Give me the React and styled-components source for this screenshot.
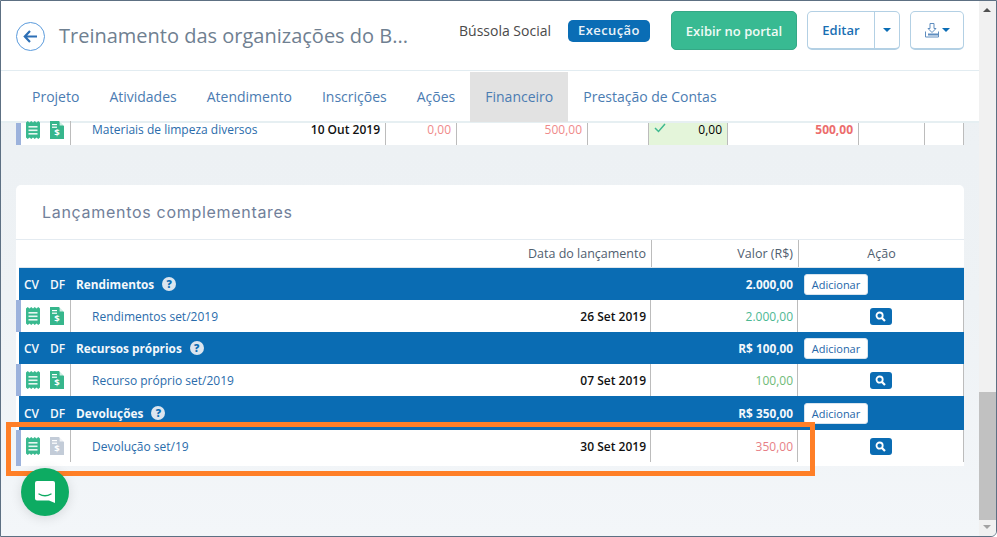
import React from "react";
import styled, { createGlobalStyle } from "styled-components";

const Global = createGlobalStyle`
  html, body { margin: 0; padding: 0; width: 997px; height: 537px; overflow: hidden; }
  body { font-family: "Open Sans", "Liberation Sans", sans-serif; }
  * { box-sizing: border-box; }
`;
const Frame = styled.div`
  position: relative; width: 997px; height: 537px; display: flex; overflow: hidden;
  border-top: 1px solid #5d7083; border-left: 1px solid #5d7083; border-bottom: 1px solid #5d7083;
  border-right: 1px solid #5d7083; border-bottom-right-radius: 6px;
  background: #f1f5f8;
`;
const Main = styled.div`
  width: 979px; display: flex; flex-direction: column; height: 100%;
  background: linear-gradient(180deg, #ecf0f3 0, #eef2f5 300px, #f3f6f9 100%);
`;
const Header = styled.header`
  height: 70px; flex: none; background: #fff; border-bottom: 1px solid #e2ecf1;
  display: flex; align-items: center; padding: 0 0 10px 15px;
`;
const BackCircle = styled.div`
  width: 29px; height: 29px; border-radius: 50%; border: 1px solid #5b9bdc; color: #2d6fb5;
  display: flex; align-items: center; justify-content: center; flex: none; margin: 11px 14px 0 0;
`;
const Title = styled.h1`
  margin: 10px 0 0; font-size: 20px; font-weight: 400; color: #6f8091; width: 350px; flex: none;
  white-space: nowrap;
`;
const Org = styled.span`
  margin-left: 50px; font-size: 14px; color: #4a4a4a; white-space: nowrap; width: 92px; flex: none;
`;
const Badge = styled.span`
  margin-left: 17px; width: 82px; height: 22px; border-radius: 5px; background: #0a6db5; color: #e9f2f8;
  font-size: 13px; font-weight: 600; display: flex; align-items: center; justify-content: center;
  flex: none; letter-spacing: .4px; padding-bottom: 1px;
`;
const PortalButton = styled.button`
  margin-left: 21px; width: 126px; height: 39px; border-radius: 5px; border: 1px solid #35a886; background: #38ba92;
  color: #f0faf6; font: 600 13px "Open Sans", sans-serif; padding: 0; flex: none;
`;
const OutlineGroup = styled.div`
  margin-left: ${p => p.$ml}px; height: 39px; width: ${p => p.$w}px; display: flex; flex: none;
  border: 1px solid #b3d0e4; border-bottom-width: 2px; border-radius: 5px; background: #fff;
  color: #0a6db5; align-items: center; justify-content: center;
`;
const EditLabel = styled.span`
  width: 67px; height: 100%; display: flex; align-items: center; justify-content: center;
  font-size: 13px; font-weight: 600; color: #1a6fb3; border-right: 1px solid #b3d0e4;
`;
const CaretBox = styled.span`
  flex: 1; display: flex; align-items: center; justify-content: center;
`;
const Caret = styled.i`
  display: inline-block; width: 0; height: 0; border-left: 4px solid transparent; border-right: 4px solid transparent;
  border-top: 4px solid ${p => p.$c || "#0a6db5"}; margin-left: ${p => p.$ml || 0}px;
`;
const Tabs = styled.nav`
  height: 52px; flex: none; background: #fff; border-bottom: 2px solid #e6eff2; display: flex; padding-left: 16px; padding-top: 1px;
`;
const Tab = styled.a`
  display: flex; align-items: center; height: 50px; padding: 0 15px 1px; font-size: 14px; color: #4b7cb2;
  background: ${p => p.$active ? "#e2e2e2" : "transparent"};
`;
const Scroll = styled.div`
  flex: 1; padding: 0 15px; display: flex; flex-direction: column; min-height: 0;
`;
const CutRow = styled.div`
  height: 22px; flex: none; background: #fff; border-left: 5px solid #9cb2dc; display: grid;
  grid-template-columns: 50px 315px 71px 131px 61px 79px 131px 66px 39px; margin-bottom: 40px;
  width: 948px; font-size: 12px;
`;
const CutCell = styled.div`
  border-right: 1px solid #bcbcbc; padding: 0 5px 3px 5px; line-height: 14px;
  color: ${p => p.$c || "#000"}; font-weight: ${p => p.$b ? 700 : 400}; background: ${p => p.$bg || "transparent"};
  display: flex; justify-content: ${p => p.$between ? "space-between" : "flex-end"}; white-space: nowrap;
`;
const IconPair = styled.div`
  display: flex; align-items: ${p => p.$center ? "center" : "flex-start"}; padding-left: 5px; gap: 10px; border-right: 1px solid #bcbcbc;
  margin-top: ${p => p.$mt || 0}px; margin-bottom: ${p => p.$mb || 0}px;
`;
const Card = styled.section`
  width: 948px; height: 281px; flex: none; background: #fff; border-radius: 5px; display: flex; flex-direction: column;
`;
const CardTitle = styled.h2`
  height: 55px; flex: none; margin: 0; padding: 17px 0 0 26px; font-family: "Inter", sans-serif; font-weight: 400;
  font-size: 16px; color: #71809a; border-bottom: 1px solid #e4ebf1; line-height: 20px; letter-spacing: .7px;
`;
const columns = "26px 26px 581px 147px 1fr";
const HeadRow = styled.div`
  height: 28px; flex: none; display: grid; grid-template-columns: ${columns}; margin-left: 3px;
  font-size: 12.5px; color: #50606f; border-bottom: 1px solid #dfe6ec;
`;
const HeadCell = styled.div`
  display: flex; align-items: center; justify-content: ${p => p.$center ? "center" : "flex-end"}; padding: 0 5px;
  border-right: ${p => p.$sep ? "1px solid #bcbcbc" : "none"};
`;
const GroupRow = styled.div`
  height: ${p => p.$h || 32}px; flex: none; display: grid; grid-template-columns: ${columns}; margin-left: 3px; background: #0a6cb3;
  color: #f4f8fb;
`;
const GCell = styled.div`
  display: flex; align-items: center; justify-content: ${p => p.$right ? "flex-end" : "flex-start"};
  padding: 0 ${p => p.$right ? 6 : 5}px 0 5px; white-space: nowrap; font-weight: ${p => p.$light ? 600 : 700}; font-size: ${p => p.$light ? 12 : 11.8}px;
`;
const Help = styled.span`
  width: 14px; height: 14px; border-radius: 50%; background: #dbe5ef; color: #0a6cb3; font-size: 10.5px; font-weight: 800;
  display: inline-flex; align-items: center; justify-content: center; margin-left: 8px;
`;
const AddButton = styled.button`
  height: 21px; width: 64px; border-radius: 3px; border: 1px solid #d8e4ee; background: #fff; color: #2566a8;
  font: 400 11px "Open Sans", sans-serif; padding: 0;
`;
const DataRow = styled.div`
  height: ${p => p.$h || 32}px; flex: none; display: grid; position: relative;
  background: #fff; font-size: 12px; border-left: 5px solid #9cb2dc; width: 948px;
  grid-template-columns: 50px 580px 147px 1fr;
`;
const DescCell = styled.div`
  display: flex; justify-content: space-between; align-items: center; padding: 0 4px 0 21px; border-right: 1px solid #bcbcbc; margin-bottom: ${p => p.$mb || 0}px;
`;
const DescLink = styled.span` color: #2a6cab; font-size: 12px; `;
const FirstLink = styled(DescLink)` margin-right: auto; padding-left: 16px; `;
const DateText = styled.span` color: #111; font-weight: 600; font-size: 12px; `;
const ValueCell = styled.div`
  display: flex; align-items: center; justify-content: flex-end; padding-right: 4px; border-right: 1px solid #bcbcbc;
  color: ${p => p.$c}; font-size: 12px; margin-bottom: ${p => p.$mb || 0}px;
`;
const ActionCell = styled.div`
  display: flex; align-items: center; justify-content: center; border-right: 1px solid #bcbcbc; margin-bottom: ${p => p.$mb || 0}px;
`;
const SearchBtn = styled.span`
  width: 22px; height: 17px; border-radius: 3px; background: #0a6cb3; display: flex; align-items: center; justify-content: center;
`;
const Bar = styled.aside`
  width: 17px; height: 100%; flex: none; background: #f1f1f1; position: relative;
`;
const Arrow = styled.i`
  position: absolute; left: 4px; width: 0; height: 0; border-left: 4px solid transparent; border-right: 4px solid transparent;
  ${p => p.$up ? "top: 7px; border-bottom: 4px solid #505050;" : "bottom: 7px; border-top: 4px solid #a3a3a3;"}
`;
const Thumb = styled.div`
  position: absolute; left: 0; right: 0; top: 391px; height: 128px; background: #c1c1c1;
`;
const Highlight = styled.div`
  position: absolute; left: 5px; top: 421px; width: 809px; height: 54px; border: 5px solid #ff7f27; pointer-events: none;
`;
const Chat = styled.div`
  position: absolute; left: 20px; top: 467px; width: 48px; height: 48px; border-radius: 50%; background: #0dab62;
  box-shadow: 0 2px 12px rgba(0,0,0,.12); display: flex; align-items: center; justify-content: center;
`;

const Receipt = () => (
  <svg width="14" height="18" viewBox="0 0 14 18">
    <path d="M0 1.5 L1.75 0 L3.5 1.5 L5.25 0 L7 1.5 L8.75 0 L10.5 1.5 L12.25 0 L14 1.5 V16.5 L12.25 18 L10.5 16.5 L8.75 18 L7 16.5 L5.25 18 L3.5 16.5 L1.75 18 L0 16.5 Z" fill="#39b98f" />
    <rect x="2.5" y="5" width="9" height="1.6" fill="#e8f7f1" />
    <rect x="2.5" y="8.5" width="9" height="1.6" fill="#e8f7f1" />
    <rect x="2.5" y="12" width="9" height="1.6" fill="#e8f7f1" />
  </svg>
);
const DocDollar = ({ off }) => {
  const fill = off ? "#c3ccd8" : "#36b68c";
  return (
    <svg width="14" height="18" viewBox="0 0 14 18">
      <path d="M0 0 H9 L14 5 V18 H0 Z" fill={fill} />
      <path d="M9.6 0 L14 4.4 H9.6 Z" fill="#fff" opacity=".75" />
      <rect x="2" y="3" width="5" height="1.2" fill="#fff" />
      <rect x="2" y="5.6" width="5" height="1.2" fill="#fff" />
      <text x="7" y="15.4" textAnchor="middle" fontSize="9.5" fontWeight="700" fontFamily="Open Sans, sans-serif" fill="#fff">$</text>
    </svg>
  );
};
const Search = () => (
  <svg width="11" height="11" viewBox="0 0 11 11" fill="none" stroke="#fff">
    <circle cx="4.6" cy="4.6" r="3.1" strokeWidth="1.8" />
    <path d="M7 7 L10 10" strokeWidth="2.2" />
  </svg>
);

const groups = [
  { name: "Rendimentos", total: "2.000,00", h: 32, desc: "Rendimentos set/2019", date: "26 Set 2019", val: "2.000,00", c: "#4cb893", rh: 32 },
  { name: "Recursos próprios", total: "R$ 100,00", h: 32, desc: "Recurso próprio set/2019", date: "07 Set 2019", val: "100,00", c: "#6fbb78", rh: 32 },
  { name: "Devoluções", total: "R$ 350,00", h: 34, desc: "Devolução set/19", date: "30 Set 2019", val: "350,00", c: "#e77f86", rh: 36, mb: 4, off: true },
];

export default function App() {
  return (
    <Frame>
      <Global />
      <Main>
        <Header>
          <BackCircle>
            <svg width="15" height="13" viewBox="0 0 15 13" fill="none" stroke="#2d6fb5" strokeWidth="2.2">
              <path d="M14 6.5 H2 M7 1 L1.8 6.5 L7 12" />
            </svg>
          </BackCircle>
          <Title>Treinamento das organizações do B...</Title>
          <Org>Bússola Social</Org>
          <Badge>Execução</Badge>
          <PortalButton>Exibir no portal</PortalButton>
          <OutlineGroup $ml={10} $w={93}>
            <EditLabel>Editar</EditLabel>
            <CaretBox><Caret /></CaretBox>
          </OutlineGroup>
          <OutlineGroup $ml={10} $w={54}>
            <svg width="14" height="15" viewBox="0 0 14 15" fill="none" stroke="#5f8dbf" strokeWidth="1">
              <path d="M5 .5 H9 V5.5 H11 L7 9.5 L3 5.5 H5 Z" />
              <path d="M.5 8.5 V14 H13.5 V8.5" />
              <path d="M3 11.5 H13" strokeWidth="2" stroke="#5f8dbf" />
            </svg>
            <Caret $ml={3} />
          </OutlineGroup>
        </Header>
        <Tabs>
          {["Projeto", "Atividades", "Atendimento", "Inscrições", "Ações", "Financeiro", "Prestação de Contas"].map(t => (
            <Tab key={t} $active={t === "Financeiro"}>{t}</Tab>
          ))}
        </Tabs>
        <Scroll>
          <CutRow>
            <IconPair $mt={-2}><Receipt /><DocDollar /></IconPair>
            <CutCell><FirstLink>Materiais de limpeza diversos</FirstLink><DateText>10 Out 2019</DateText></CutCell>
            <CutCell $c="#ef8a8a">0,00</CutCell>
            <CutCell $c="#ef8a8a">500,00</CutCell>
            <CutCell />
            <CutCell $bg="#e4f5da" $between>
              <svg width="12" height="10" viewBox="0 0 12 10" fill="none" stroke="#3fb98f" strokeWidth="1.5"><path d="M1 5 L4.5 8.5 L11 1" /></svg>
              <span>0,00</span>
            </CutCell>
            <CutCell $c="#ec6d6d" $b>500,00</CutCell>
            <CutCell />
            <CutCell />
          </CutRow>
          <Card>
            <CardTitle>Lançamentos complementares</CardTitle>
            <HeadRow>
              <HeadCell />
              <HeadCell />
              <HeadCell $sep>Data do lançamento</HeadCell>
              <HeadCell $sep>Valor (R$)</HeadCell>
              <HeadCell $center>Ação</HeadCell>
            </HeadRow>
            {groups.map(g => (
              <React.Fragment key={g.name}>
                <GroupRow $h={g.h}>
                  <GCell $light>CV</GCell>
                  <GCell $light>DF</GCell>
                  <GCell>{g.name}<Help>?</Help></GCell>
                  <GCell $right>{g.total}</GCell>
                  <GCell><AddButton>Adicionar</AddButton></GCell>
                </GroupRow>
                <DataRow $h={g.rh}>
                  <IconPair $center $mb={g.mb}>
                    <Receipt /><DocDollar off={g.off} />
                  </IconPair>
                  <DescCell $mb={g.mb}><DescLink>{g.desc}</DescLink><DateText>{g.date}</DateText></DescCell>
                  <ValueCell $c={g.c} $mb={g.mb}>{g.val}</ValueCell>
                  <ActionCell $mb={g.mb}><SearchBtn><Search /></SearchBtn></ActionCell>
                </DataRow>
              </React.Fragment>
            ))}
          </Card>
        </Scroll>
      </Main>
      <Bar>
        <Arrow $up />
        <Thumb />
        <Arrow />
      </Bar>
      <Highlight />
      <Chat>
        <svg width="22" height="24" viewBox="0 0 22 24">
          <path d="M3 1 H19 A2 2 0 0 1 21 3 V23 L15 20.5 H3 A2 2 0 0 1 1 18.5 V3 A2 2 0 0 1 3 1 Z" fill="#fff" />
          <path d="M5 14 Q11 17.5 17 14" fill="none" stroke="#0dab62" strokeWidth="1.4" strokeLinecap="round" />
        </svg>
      </Chat>
    </Frame>
  );
}
